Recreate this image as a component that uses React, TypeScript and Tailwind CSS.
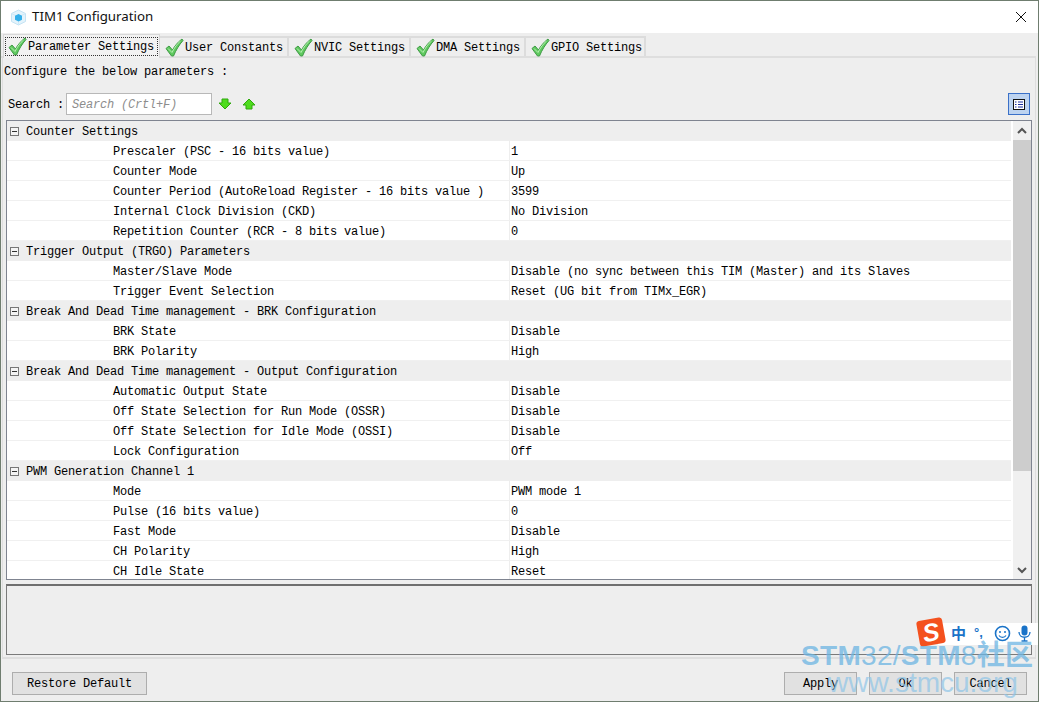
import { Fragment } from "react";

const sections = [
  {
    title: "Counter Settings",
    rows: [
      ["Prescaler (PSC - 16 bits value)", "1"],
      ["Counter Mode", "Up"],
      ["Counter Period (AutoReload Register - 16 bits value )", "3599"],
      ["Internal Clock Division (CKD)", "No Division"],
      ["Repetition Counter (RCR - 8 bits value)", "0"],
    ],
  },
  {
    title: "Trigger Output (TRGO) Parameters",
    rows: [
      ["Master/Slave Mode", "Disable (no sync between this TIM (Master) and its Slaves"],
      ["Trigger Event Selection", "Reset (UG bit from TIMx_EGR)"],
    ],
  },
  {
    title: "Break And Dead Time management - BRK Configuration",
    rows: [
      ["BRK State", "Disable"],
      ["BRK Polarity", "High"],
    ],
  },
  {
    title: "Break And Dead Time management - Output Configuration",
    rows: [
      ["Automatic Output State", "Disable"],
      ["Off State Selection for Run Mode (OSSR)", "Disable"],
      ["Off State Selection for Idle Mode (OSSI)", "Disable"],
      ["Lock Configuration", "Off"],
    ],
  },
  {
    title: "PWM Generation Channel 1",
    rows: [
      ["Mode", "PWM mode 1"],
      ["Pulse (16 bits value)", "0"],
      ["Fast Mode", "Disable"],
      ["CH Polarity", "High"],
      ["CH Idle State", "Reset"],
    ],
  },
];

const tabs = [
  { label: "User Constants", width: "w-[129px]" },
  { label: "NVIC Settings", width: "w-[122px]" },
  { label: "DMA Settings", width: "w-[115px]" },
  { label: "GPIO Settings", width: "w-[120px]" },
];

const Check = () => (
  <svg width="19" height="19" viewBox="0 0 19 19" className="shrink-0">
    <path d="M1 10.5 L4 8 L7.5 12 C10 7.5 13 4 17 1 L18 2.5 C14 7 11 12 8.5 18 L6.5 18 Z" fill="#5fc95f" stroke="#3f9a45" strokeWidth="1" strokeLinejoin="round" />
    <path d="M3 10.5 L7 14.5 C9.5 9.5 12 6 15.5 3" fill="none" stroke="#b5eeb0" strokeWidth="1" />
  </svg>
);

const Arrow = ({ up }: { up?: boolean }) => (
  <svg width="14" height="12" viewBox="0 0 14 12" className={up ? "" : "rotate-180"}>
    <path d="M7 1 L13 7 L10 7 L10 11 L4 11 L4 7 L1 7 Z" fill="#4fdc1e" stroke="#2ea80c" strokeWidth="1" strokeLinejoin="round" />
  </svg>
);

const Chevron = ({ up }: { up?: boolean }) => (
  <svg width="10" height="7" viewBox="0 0 10 7" className={up ? "" : "rotate-180"}>
    <path d="M1 6 L5 2 L9 6" fill="none" stroke="#555" strokeWidth="2" />
  </svg>
);

const Minus = () => (
  <span className="w-[9px] h-[9px] border border-[#777] bg-[#f4f4f4] flex items-center justify-center shrink-0">
    <span className="w-[5px] h-px bg-[#333]" />
  </span>
);

const Btn = ({ label, width }: { label: string; width: string }) => (
  <div className={`${width} h-[23px] pt-[1px] bg-[#e1e1e1] border border-[#adadad] flex items-center justify-center text-black`}>
    {label}
  </div>
);

export default function App() {
  return (
    <div
      className="relative w-[1039px] h-[702px] overflow-hidden bg-[#eeeeee] border border-[#6f7d6f] flex flex-col text-[12px] tracking-[-0.2px] text-black"
      style={{ fontFamily: '"Liberation Mono", monospace' }}
    >
      {/* title bar */}
      <div className="h-[32px] bg-white flex items-center pl-[9px] pr-[10px] shrink-0 tracking-normal">
        <svg width="17" height="17" viewBox="0 0 17 17">
          <path d="M8.5 1 L15.5 4.5 L15.5 12.5 L8.5 16 L1.5 12.5 L1.5 4.5 Z" fill="#e4f3fb" stroke="#c4e3f4" />
          <path d="M1.5 4.5 L8.5 8 L15.5 4.5 M8.5 8 V16" fill="none" stroke="#cfe9f7" />
          <path d="M8.5 5 L12 6.8 L12 10.8 L8.5 12.6 L5 10.8 L5 6.8 Z" fill="#35b0ea" />
        </svg>
        <span className="ml-[5px] text-[13.3px] text-[#111]" style={{ fontFamily: '"Noto Sans", sans-serif' }}>
          TIM1 Configuration
        </span>
        <svg width="12" height="12" viewBox="0 0 12 12" className="ml-auto mr-[1px]">
          <path d="M1 1 L11 11 M11 1 L1 11" stroke="#111" strokeWidth="1" />
        </svg>
      </div>

      {/* tabs */}
      <div className="h-[25px] shrink-0 flex items-end pl-[2px] mr-[2px] border-b-2 border-[#dedede]">
        <div className="h-[24px] w-[157px] bg-[#f2f2f2] border border-b-0 border-[#d8d8d8] flex items-start pl-[1px] pt-[2px] -mb-[2px] shrink-0">
          <div className="flex items-center gap-[1px] outline-1 outline-dotted outline-[#333] -outline-offset-1 h-[19px] pl-[3px] w-[153px]">
            <Check />
            <span className="whitespace-nowrap pt-[1px]">Parameter Settings</span>
          </div>
        </div>
        {tabs.map((t) => (
          <div
            key={t.label}
            className={`${t.width} h-[20px] border-t-2 border-r-2 border-[#dcdcdc] flex items-center pl-[5px] gap-[1px] shrink-0`}
          >
            <Check />
            <span className="whitespace-nowrap pt-[2px]">{t.label}</span>
          </div>
        ))}
      </div>

      <div className="h-[601px] shrink-0 flex flex-col ml-[1px] mr-[2px] px-[3px] border-x border-b-2 border-[#dedede]">
        <div className="h-[26px] flex items-center -ml-[2px] pt-[1px] shrink-0">Configure the below parameters :</div>

        {/* search bar */}
        <div className="h-[36px] flex items-center pl-[2px] pr-[2px] pt-[4px] shrink-0">
          <span className="w-[58px] whitespace-nowrap pt-[1px]">Search :</span>
          <div className="w-[146px] h-[22px] bg-white border border-[#b8b8b8] flex items-center pl-[5px] pt-[1px] italic text-[#8d8d8d]">
            Search (Crtl+F)
          </div>
          <div className="ml-[6px] flex">
            <Arrow />
          </div>
          <div className="ml-[10px] flex">
            <Arrow up />
          </div>
          <div className="ml-auto w-[22px] h-[22px] bg-[#bdd3f0] border border-[#3a70c8] flex items-center justify-center">
            <svg width="12" height="11" viewBox="0 0 12 11">
              <rect x="0.5" y="0.5" width="11" height="10" fill="#fff" stroke="#111" />
              <path d="M2 3 H3.5 M5 3 H10 M2 5.5 H3.5 M5 5.5 H10 M2 8 H3.5 M5 8 H10" stroke="#1c2fa0" />
            </svg>
          </div>
        </div>

        {/* parameter table */}
        <div className="h-[460px] shrink-0 border border-[#7f8490] flex bg-white overflow-hidden">
          <div className="flex-1 min-w-0 overflow-hidden">
            {sections.map((s) => (
              <Fragment key={s.title}>
                <div className="h-[20px] bg-[#eeeeee] flex items-center pl-[3px] gap-[7px] whitespace-nowrap">
                  <Minus />
                  <span className="pt-[1px]">{s.title}</span>
                </div>
                {s.rows.map(([name, value]) => (
                  <div key={name} className="h-[20px] flex border-b border-[#f0f0f0] whitespace-nowrap">
                    <div className="w-[503px] pl-[106px] pt-[2px] flex items-center border-r border-[#eeeeee]">{name}</div>
                    <div className="pl-[1px] pt-[2px] flex items-center">{value}</div>
                  </div>
                ))}
              </Fragment>
            ))}
          </div>
          <div className="w-[18px] ml-[2px] shrink-0 bg-[#f0f0f0] flex flex-col">
            <div className="h-[19px] flex items-center justify-center">
              <Chevron up />
            </div>
            <div className="h-[331px] bg-[#cdcdcd]" />
            <div className="flex-1" />
            <div className="h-[18px] flex items-center justify-center">
              <Chevron />
            </div>
          </div>
        </div>

        {/* description pane */}
        <div className="mt-[4px] h-[71px] shrink-0 border border-[#7a7a7a] border-t-2 border-t-[#6f6f6f] bg-[#eeeeee]" />
      </div>

      {/* footer buttons */}
      <div className="flex-1 flex items-start px-[11px] pt-[13px]">
        <Btn label="Restore Default" width="w-[135px]" />
        <div className="ml-auto flex gap-[12px]">
          <Btn label="Apply" width="w-[73px]" />
          <Btn label="Ok" width="w-[73px]" />
          <Btn label="Cancel" width="w-[73px]" />
        </div>
      </div>

      {/* input method toolbar, sits over the window */}
      <div className="absolute left-[917px] top-[617px] w-[121px] h-[27px] flex items-center tracking-normal">
        <div className="absolute left-[20px] top-[5px] w-[101px] h-[22px] bg-white" />
        <div
          className="relative w-[26px] h-[26px] rounded-[3px] bg-[#f4511e] -rotate-[10deg] flex items-center justify-center text-white font-bold italic text-[25px] leading-none shrink-0"
          style={{ fontFamily: '"Liberation Sans", sans-serif' }}
        >
          S
        </div>
        <span className="relative ml-[7px] mt-[4px] text-[15px] font-bold text-[#1a73c8]" style={{ fontFamily: '"Noto Sans CJK SC", sans-serif' }}>
          中
        </span>
        <span className="relative ml-[8px] mt-[2px] text-[13px] font-bold text-[#1a73c8]" style={{ fontFamily: '"Liberation Sans", sans-serif' }}>
          °,
        </span>
        <svg width="17" height="17" viewBox="0 0 17 17" className="relative ml-[11px] mt-[4px] shrink-0">
          <circle cx="8.5" cy="8.5" r="7" fill="none" stroke="#1a73c8" strokeWidth="1.6" />
          <circle cx="6" cy="7" r="1" fill="#1a73c8" />
          <circle cx="11" cy="7" r="1" fill="#1a73c8" />
          <path d="M5 10.5 C6.5 13 10.5 13 12 10.5" fill="none" stroke="#1a73c8" strokeWidth="1.2" />
        </svg>
        <svg width="13" height="17" viewBox="0 0 13 17" className="relative ml-[7px] mt-[4px] shrink-0">
          <rect x="3.5" y="0.5" width="6" height="10" rx="3" fill="#1a73c8" />
          <path d="M1 7 C1 14 12 14 12 7 M6.5 12 V16 M3.5 16 H9.5" fill="none" stroke="#1a73c8" strokeWidth="1.3" />
        </svg>
        <div className="relative ml-[7px] mt-[4px] w-[2px] h-[12px] bg-[#1a73c8]" />
      </div>

      {/* site watermark, semi-transparent over the corner */}
      <div className="absolute left-[800px] top-[641px] pointer-events-none text-[#6db5e3]/75 leading-none whitespace-nowrap tracking-normal" style={{ fontFamily: '"Liberation Sans", "Noto Sans CJK SC", sans-serif' }}>
        <div className="text-[28px] h-[30px] tracking-[0.3px]">
          <span className="font-bold">STM</span>
          <span>32/</span>
          <span className="font-bold">STM</span>
          <span>8</span>
          <span className="font-bold">社区</span>
        </div>
        <div className="ml-[27px] -mt-[3px] text-[28px] text-[#8dc4e8]/70">www.stmcu.org</div>
      </div>
    </div>
  );
}
